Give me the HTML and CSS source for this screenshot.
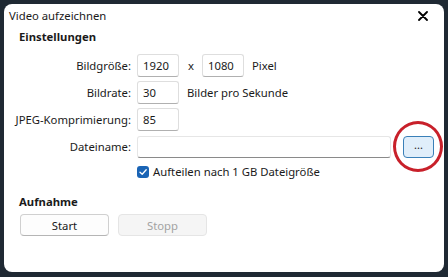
FILE: index.html
```html
<!DOCTYPE html>
<html lang="de">
<head>
    <meta charset="UTF-8">
    <title>Video aufzeichnen</title>
    <link rel="stylesheet" href="styles.css">
</head>
<body>

<div class="window">
    <div class="titlebar">
        <span class="title">Video aufzeichnen</span>
        <svg class="close" width="10" height="10" viewBox="0 0 10 10">
            <path d="M1 1 L9 9 M9 1 L1 9" stroke="#000" stroke-width="1.8" stroke-linecap="round"/>
        </svg>
    </div>

    <div class="content">
        <h3 class="section">Einstellungen</h3>
        <div class="form">
            <label>Bildgröße:</label>
            <div class="field">
                <input class="num" type="text" value="1920">
                <span class="times">x</span>
                <input class="num" type="text" value="1080">
                <span class="unit">Pixel</span>
            </div>

            <label>Bildrate:</label>
            <div class="field">
                <input class="num" type="text" value="30">
                <span class="unit">Bilder pro Sekunde</span>
            </div>

            <label>JPEG-Komprimierung:</label>
            <div class="field">
                <input class="num" type="text" value="85">
            </div>

            <label>Dateiname:</label>
            <div class="field">
                <input class="file" type="text" value="">
                <button class="browse">...</button>
            </div>

            <span></span>
            <div class="field check-row">
                <span class="checkbox">
                    <svg width="10" height="10" viewBox="0 0 10 10">
                        <path d="M2 5.2 L4.2 7.3 L8.2 2.8" stroke="#fff" stroke-width="1.3" fill="none" stroke-linecap="round" stroke-linejoin="round"/>
                    </svg>
                </span>
                <span>Aufteilen nach 1 GB Dateigröße</span>
            </div>
        </div>

        <h3 class="section section-rec">Aufnahme</h3>
        <div class="buttons">
            <button class="btn">Start</button>
            <button class="btn" disabled>Stopp</button>
        </div>
    </div>

    <div class="marker"></div>
</div>

</body>
</html>
```

FILE: styles.css
```css
body {
    margin: 0;
    background-color: #1f2933;
    font-family: 'Noto Sans', 'Open Sans', sans-serif;
    font-size: 11.3px;
    color: #1a1a1a;
}

.window {
    position: relative;
    width: 440px;
    height: 268px;
    margin: 4px 0 0 4px;
    background-color: #fff;
    border-radius: 8px;
}

.titlebar {
    display: flex;
    align-items: center;
    justify-content: space-between;
    height: 23px;
    padding: 0 16px 0 5px;
}

.content {
    padding: 0 0 0 10px;
}

.section {
    margin: 2px 0 0 5px;
    font-size: 11.3px;
    font-weight: bold;
    line-height: 16px;
}

.form {
    display: grid;
    grid-template-columns: 117px 1fr;
    column-gap: 6px;
    row-gap: 4px;
    margin-top: 9px;
    align-items: center;
}

.form label {
    text-align: right;
    white-space: nowrap;
}

.field {
    display: flex;
    align-items: center;
    height: 23px;
    white-space: nowrap;
}

input {
    box-sizing: border-box;
    height: 23px;
    padding: 0 5px;
    border: 1px solid #dedede;
    border-bottom-color: #b0b0b0;
    border-radius: 3px;
    font-family: inherit;
    font-size: 11.3px;
    color: #1a1a1a;
    outline: none;
}

.num {
    width: 42px;
}

.times {
    margin: 0 8px 0 9px;
}

.unit {
    margin-left: 8px;
}

.file {
    width: 254px;
    height: 22px;
    border-color: #e6e6e6;
    border-bottom-color: #8a8a8a;
}

.browse {
    box-sizing: border-box;
    width: 31px;
    height: 22px;
    margin-left: 12px;
    padding: 0 0 4px;
    border: 1px solid #3a80b8;
    border-radius: 4px;
    background-color: #e0eefa;
    font-family: inherit;
    font-size: 11px;
    color: #1a1a1a;
}

.check-row {
    height: 15px;
    margin-top: 2px;
}

.checkbox {
    display: flex;
    align-items: center;
    justify-content: center;
    width: 12px;
    height: 12px;
    margin-right: 4px;
    border-radius: 3px;
    background-color: #1a64b5;
}

.section-rec {
    margin-top: 15px;
}

.buttons {
    display: flex;
    gap: 9px;
    margin: 4px 0 0 6px;
}

.btn {
    box-sizing: border-box;
    width: 89px;
    height: 22px;
    border: 1px solid #d0d0d0;
    border-bottom-color: #b5b5b5;
    border-radius: 4px;
    background-color: #fdfdfd;
    font-family: inherit;
    font-size: 11.3px;
    color: #1a1a1a;
}

.btn:disabled {
    background-color: #f5f5f5;
    border-color: #e5e5e5;
    color: #a3a3a3;
}

.marker {
    position: absolute;
    left: 389px;
    top: 117px;
    width: 44px;
    height: 45px;
    border: 3.5px solid #c8202a;
    border-radius: 50%;
}
```
